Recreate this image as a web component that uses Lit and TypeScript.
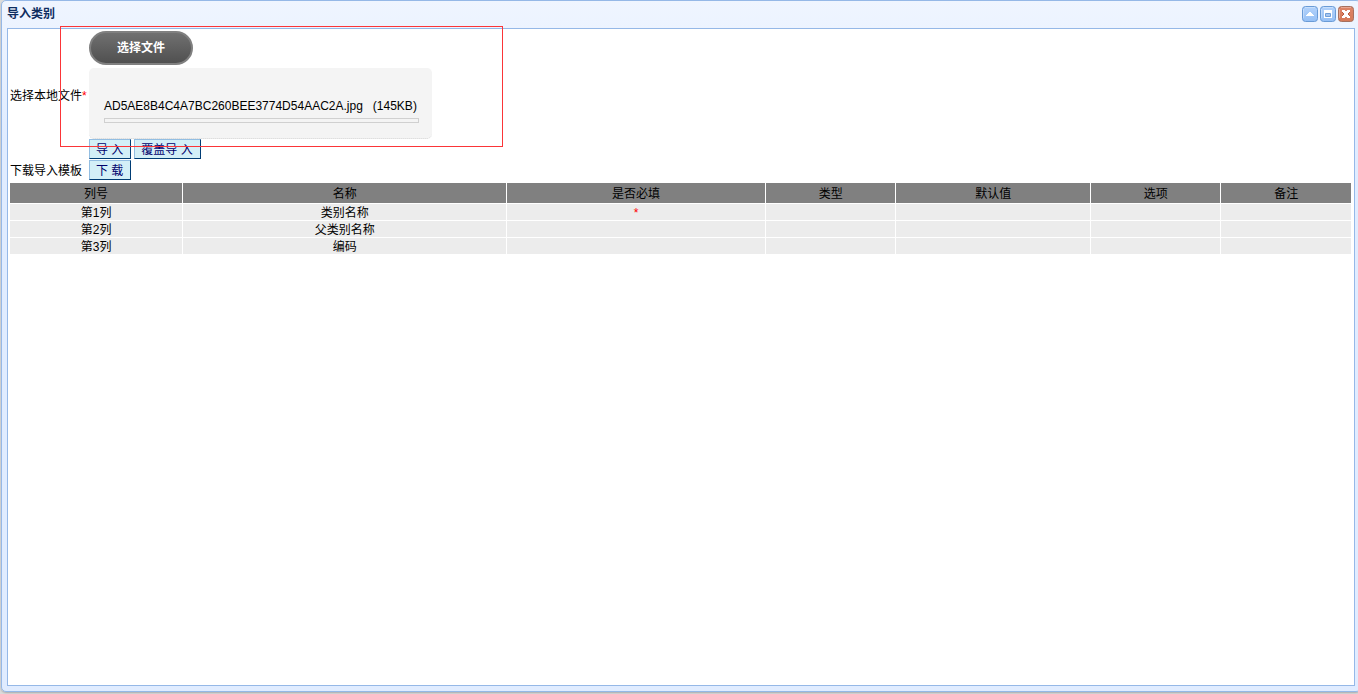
import { LitElement, html, css, svg } from "lit";
import { customElement, property } from "lit/decorators.js";

@customElement("window-tools")
class WindowTools extends LitElement {
  static styles = css`
    :host { display: flex; gap: 2px; }
    .tool { width: 16px; height: 16px; padding: 0; border: 0; background: none; display: block; }
    .icon { display: block; }
  `;

  private frame(stroke: string, from: string, to: string, id: string) {
    return svg`
      <defs><linearGradient id=${id} x1="0" y1="0" x2="0" y2="1">
        <stop offset="0" stop-color=${from}></stop><stop offset="1" stop-color=${to}></stop>
      </linearGradient></defs>
      <rect x=".5" y=".5" width="15" height="15" rx="3" fill="url(#${id})" stroke=${stroke}></rect>
      <path d="M3 1.5h10M1.5 3v9" stroke="#fff" stroke-opacity=".3"></path>`;
  }

  render() {
    return html`
      <button class="tool" aria-label="折叠">
        <svg class="icon" width="16" height="16">
          ${this.frame("#6a9bd6", "#b3d2fb", "#96c0f5", "fold")}
          <path d="M7 6h2v1h1v1h1v1h1v1H4V9h1V8h1V7h1z" fill="#fff"></path>
        </svg>
      </button>
      <button class="tool" aria-label="最大化">
        <svg class="icon" width="16" height="16">
          ${this.frame("#6a9bd6", "#b3d2fb", "#96c0f5", "max")}
          <path d="M4 4h8v8H4z" fill="#fff"></path>
          <path d="M5.5 7.5h5v3h-5z" fill="#a5c6f2" stroke="#709fd8"></path>
        </svg>
      </button>
      <button class="tool" aria-label="关闭">
        <svg class="icon" width="16" height="16">
          ${this.frame("#a5705f", "#dd8468", "#d57a58", "close")}
          <path d="M4 4h3v1h2V4h3v3h-1v2h1v3H9v-1H7v1H4V9h1V7H4z" fill="#b95a3c"></path>
          <path d="M4 4h3v1h2V4h3v2h-1v1h-1v2h1v1h1v2H9v-1H7v1H4v-2h1V9h1V7H5V6H4z" fill="#fff"></path>
        </svg>
      </button>`;
  }
}

@customElement("upload-item")
class UploadItem extends LitElement {
  @property() name = "";
  @property() size = "";

  static styles = css`
    :host {
      display: block; box-sizing: border-box; width: 343px; height: 71px;
      padding: 30px 13px 0 15px; border-bottom: 1px dotted #d5d5d5; border-radius: 5px;
      background: #f4f4f4; white-space: nowrap;
    }
    .name { line-height: 16px; }
    .bar { height: 3px; margin-top: 4px; border: 1px solid #d0d0d0; background: #f4f4f4; }
  `;

  render() {
    return html`
      <div class="name">${this.name}&nbsp;&nbsp; (${this.size})</div>
      <div class="bar" role="progressbar" aria-label=${this.name}></div>`;
  }
}

@customElement("app-root")
class AppRoot extends LitElement {
  static styles = css`
    :host {
      display: block; position: relative; box-sizing: border-box; height: 100vh;
      padding: 0 0 2px 1px; overflow: hidden; background: #dcdcdc; color: #000;
      font: 12px/16px "Liberation Sans", "Noto Sans CJK SC", sans-serif;
    }
    .window {
      display: flex; flex-direction: column; box-sizing: border-box; height: 100%;
      margin-right: -3px; padding: 0 5px 5px; border: 1px solid #95b8e7; border-radius: 5px;
      background: linear-gradient(#eff5ff, #e0ecff 20%);
      box-shadow: 0 1px 2px #aaa;
    }
    .header {
      display: flex; align-items: center; justify-content: space-between;
      height: 26px; padding: 0 1px 1px 0;
    }
    .title { margin: 0; font-size: 12px; line-height: 16px; font-weight: bold; color: #0e2d5f; }
    .body { flex: 1; padding: 1px 2px 1px 1px; border: 1px solid #95b8e7; background: #fff; }
    .form { display: grid; grid-template-columns: 78px 1fr; column-gap: 1px; padding: 0 1px; }
    .label { align-self: center; padding-top: 2px; white-space: nowrap; }
    .field { display: flex; flex-direction: column; align-items: flex-start; padding-top: 1px; }
    .required { color: #f00; }
    .pick {
      box-sizing: border-box; width: 104px; height: 34px; margin-bottom: 3px; padding: 0;
      border: 2px solid #808080; border-radius: 30px; background: linear-gradient(#707070, #505050);
      font: inherit; font-weight: bold; color: #fff;
    }
    .actions { display: flex; gap: 3px; }
    .action {
      box-sizing: border-box; height: 20px; padding: 2px 7px 0 6px; border: 1px solid;
      border-color: #93bee2 #003c74 #003c74 #93bee2; background: #d3eff7;
      font: inherit; color: #00006b; white-space: pre;
    }
    .columns {
      width: 100%; margin-top: 2px; table-layout: fixed; border-spacing: 1px;
      text-align: center; line-height: 14px;
    }
    .columns th { height: 18px; padding: 2px 0 0; background: #808080; font-weight: normal; }
    .columns td { height: 14px; padding: 2px 0 0; background: #ececec; }
    .narrow { width: 9.7%; }
    .number { width: 12.9%; }
    .wide { width: 24.2%; }
    .need { width: 19.3%; }
    .default { width: 14.5%; }
    .highlight {
      position: absolute; left: 60px; top: 26px; box-sizing: border-box;
      width: 443px; height: 121px; border: 1px solid #fb3538; pointer-events: none;
    }
  `;

  private heads = [
    ["列号", "number"], ["名称", "wide"], ["是否必填", "need"], ["类型", "narrow"],
    ["默认值", "default"], ["选项", "narrow"], ["备注", "narrow"],
  ];
  private rows = [
    { name: "类别名称", required: true },
    { name: "父类别名称", required: false },
    { name: "编码", required: false },
  ];

  render() {
    return html`
      <section class="window">
        <header class="header">
          <h1 class="title">导入类别</h1>
          <window-tools></window-tools>
        </header>
        <main class="body">
          <div class="form">
            <label class="label" for="pick">选择本地文件<span class="required">*</span></label>
            <div class="field">
              <button class="pick" id="pick">选择文件</button>
              <upload-item name="AD5AE8B4C4A7BC260BEE3774D54AAC2A.jpg" size="145KB"></upload-item>
              <div class="actions">
                <button class="action">导 入</button>
                <button class="action">覆盖导 入</button>
              </div>
            </div>
            <label class="label" for="download">下载导入模板</label>
            <div class="field"><button class="action" id="download">下 载</button></div>
          </div>
          <table class="columns">
            <thead><tr>${this.heads.map(([text, width]) => html`<th class=${width}>${text}</th>`)}</tr></thead>
            <tbody>
              ${this.rows.map((row, i) => html`
                <tr>
                  <td>第${i + 1}列</td><td>${row.name}</td>
                  <td class="required">${row.required ? "*" : ""}</td>
                  <td></td><td></td><td></td><td></td>
                </tr>`)}
            </tbody>
          </table>
        </main>
      </section>
      <div class="highlight"></div>`;
  }
}
